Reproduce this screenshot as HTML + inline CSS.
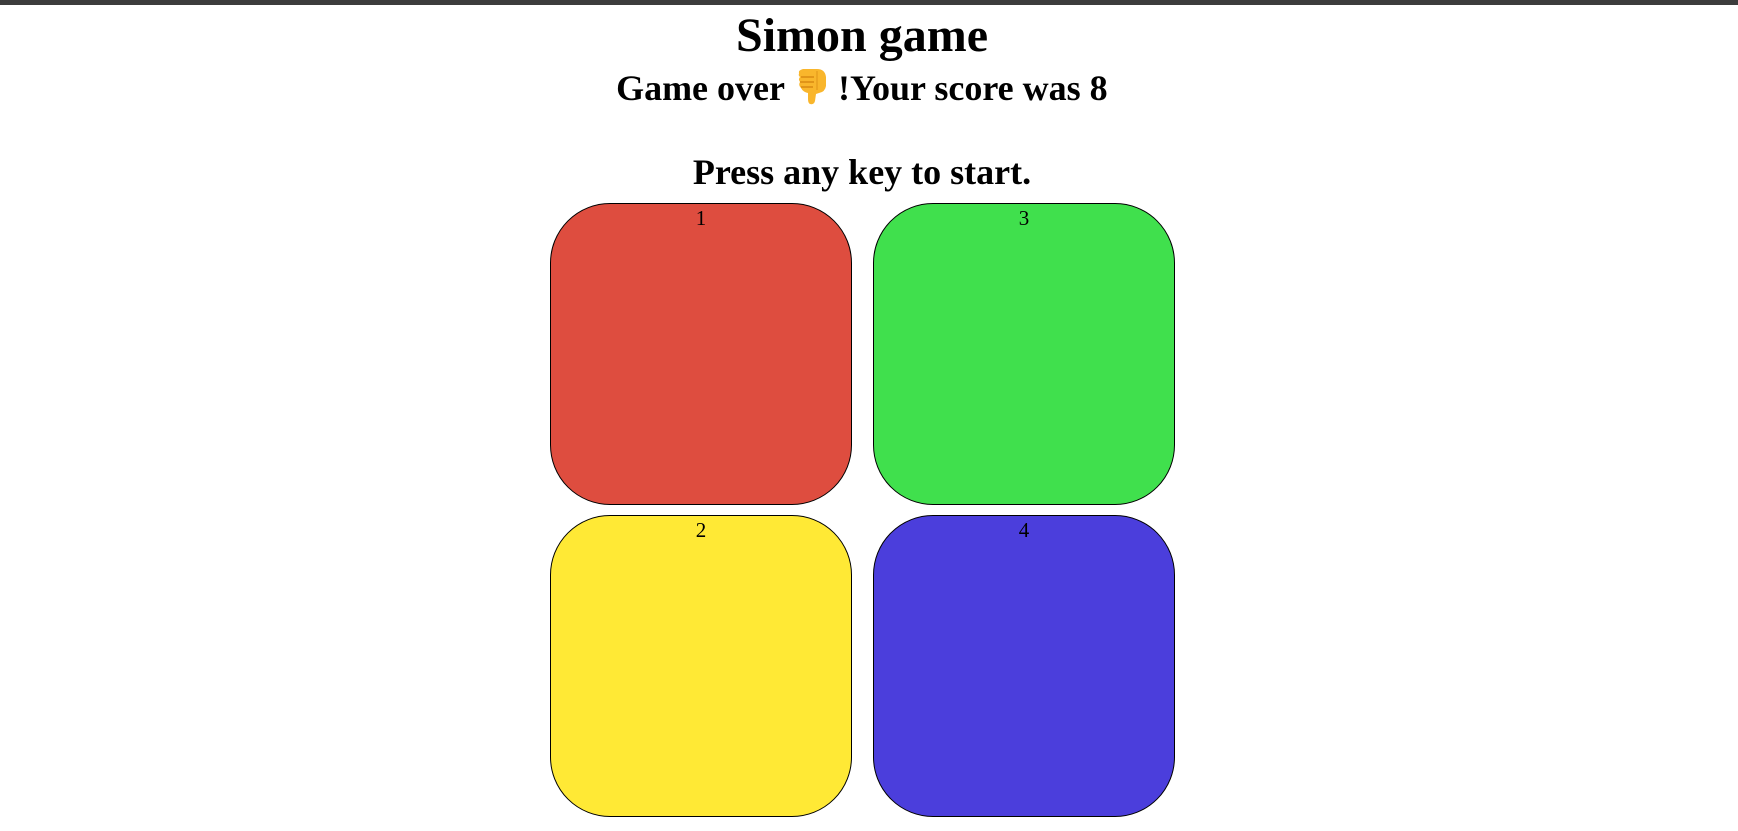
<!DOCTYPE html>
<html><head><meta charset="utf-8"><style>
html,body{margin:0;padding:0;background:#fff;width:1738px;height:831px;overflow:hidden;position:relative;font-family:"Liberation Serif",serif;color:#000}
.bar{position:absolute;left:0;top:0;width:1738px;height:5px;background:#3c3c3c}
.t{position:absolute;font-weight:bold;line-height:1;white-space:nowrap}
.box{position:absolute;width:300px;height:300px;border:1px solid #000;border-radius:60px;text-align:center;font-size:21px;line-height:1;box-sizing:content-box}
.box span{position:relative;top:4px}
</style></head><body>
<div class="bar"></div>
<div class="t" style="left:0;width:1724px;text-align:center;top:12px;font-size:48px">Simon game</div>
<div class="t" style="right:953px;top:70px;font-size:36px">Game over</div>
<svg style="position:absolute;left:795px;top:68px" width="34" height="37" viewBox="0 0 34 37">
<path d="M4 6 Q3 2 8 1 L22 1 Q30 1 31 9 L31 18 Q30 24 24 25 L21 26 L20 33 Q19 37 15 36 Q13 35 13 31 L13 25 Q8 24 6 20 Q3 17 5 14 Q3 11 5 9 Q3 7 4 6 Z" fill="#f9b62c"/>
<path d="M6 9 L19 9 M5 14 L19 14 M6 19 L18 19" stroke="#d98a12" stroke-width="1.5" fill="none"/>
<path d="M22 3 L22 22" stroke="#e39a1c" stroke-width="1.2"/>
</svg>
<div class="t" style="left:838px;top:70px;font-size:36px">!Your score was 8</div>
<div class="t" style="left:0;width:1724px;text-align:center;top:154px;font-size:36px">Press any key to start.</div>
<div class="box" style="left:550px;top:203px;background:#de4d3f"><span>1</span></div>
<div class="box" style="left:873px;top:203px;background:#40e04d"><span>3</span></div>
<div class="box" style="left:550px;top:515px;background:#ffe935"><span>2</span></div>
<div class="box" style="left:873px;top:515px;background:#4b3edc"><span>4</span></div>
</body></html>
